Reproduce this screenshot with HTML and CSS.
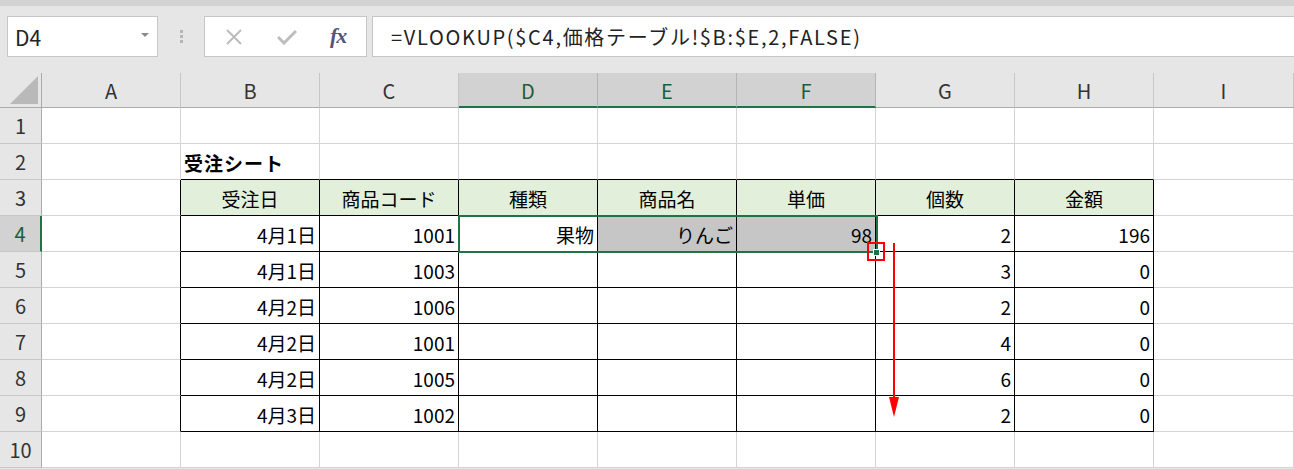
FILE: index.html
```html
<!DOCTYPE html>
<html lang="ja">
<head>
    <meta charset="UTF-8">
    <title>受注シート</title>
    <link rel="stylesheet" href="styles.css">
</head>
<body>
    <div class="toolbar">
        <div class="name-box">
            <span>D4</span>
            <span class="caret"></span>
        </div>
        <div class="grip"><i></i><i></i><i></i></div>
        <div class="buttons">
            <svg class="icon" width="18" height="16" viewBox="0 0 18 16"><path d="M2 1 L16 15 M16 1 L2 15" stroke="#bdbdbd" stroke-width="2" fill="none"/></svg>
            <svg class="icon" width="20" height="16" viewBox="0 0 20 16"><path d="M1 8 L7 14 L19 2" stroke="#bdbdbd" stroke-width="3" fill="none"/></svg>
            <span class="fx">fx</span>
        </div>
        <div class="formula">=VLOOKUP($C4,価格テーブル!$B:$E,2,FALSE)</div>
    </div>

    <div class="sheet">
        <div class="corner"><span></span></div>
        <div class="ch">A</div>
        <div class="ch">B</div>
        <div class="ch">C</div>
        <div class="ch on">D</div>
        <div class="ch on">E</div>
        <div class="ch on">F</div>
        <div class="ch">G</div>
        <div class="ch">H</div>
        <div class="ch">I</div>

        <div class="rh">1</div>
        <div class="c"></div><div class="c"></div><div class="c"></div><div class="c"></div><div class="c"></div><div class="c"></div><div class="c"></div><div class="c"></div><div class="c"></div>

        <div class="rh">2</div>
        <div class="c"></div>
        <div class="c edge-b title">受注シート</div>
        <div class="c edge-b"></div><div class="c edge-b"></div><div class="c edge-b"></div><div class="c edge-b"></div><div class="c edge-b"></div><div class="c edge-b"></div>
        <div class="c"></div>

        <div class="rh">3</div>
        <div class="c edge-r"></div>
        <div class="c t th">受注日</div>
        <div class="c t th">商品コード</div>
        <div class="c t th">種類</div>
        <div class="c t th">商品名</div>
        <div class="c t th">単価</div>
        <div class="c t th">個数</div>
        <div class="c t th">金額</div>
        <div class="c"></div>

        <div class="rh on">4</div>
        <div class="c edge-r"></div>
        <div class="c t r">4月1日</div>
        <div class="c t r">1001</div>
        <div class="c t r">果物</div>
        <div class="c t r sel">りんご</div>
        <div class="c t r sel">98</div>
        <div class="c t r">2</div>
        <div class="c t r">196</div>
        <div class="c"></div>

        <div class="rh">5</div>
        <div class="c edge-r"></div>
        <div class="c t r">4月1日</div>
        <div class="c t r">1003</div>
        <div class="c t"></div><div class="c t"></div><div class="c t"></div>
        <div class="c t r">3</div>
        <div class="c t r">0</div>
        <div class="c"></div>

        <div class="rh">6</div>
        <div class="c edge-r"></div>
        <div class="c t r">4月2日</div>
        <div class="c t r">1006</div>
        <div class="c t"></div><div class="c t"></div><div class="c t"></div>
        <div class="c t r">2</div>
        <div class="c t r">0</div>
        <div class="c"></div>

        <div class="rh">7</div>
        <div class="c edge-r"></div>
        <div class="c t r">4月2日</div>
        <div class="c t r">1001</div>
        <div class="c t"></div><div class="c t"></div><div class="c t"></div>
        <div class="c t r">4</div>
        <div class="c t r">0</div>
        <div class="c"></div>

        <div class="rh">8</div>
        <div class="c edge-r"></div>
        <div class="c t r">4月2日</div>
        <div class="c t r">1005</div>
        <div class="c t"></div><div class="c t"></div><div class="c t"></div>
        <div class="c t r">6</div>
        <div class="c t r">0</div>
        <div class="c"></div>

        <div class="rh">9</div>
        <div class="c edge-r"></div>
        <div class="c t r">4月3日</div>
        <div class="c t r">1002</div>
        <div class="c t"></div><div class="c t"></div><div class="c t"></div>
        <div class="c t r">2</div>
        <div class="c t r">0</div>
        <div class="c"></div>

        <div class="rh">10</div>
        <div class="c"></div><div class="c"></div><div class="c"></div><div class="c"></div><div class="c"></div><div class="c"></div><div class="c"></div><div class="c"></div><div class="c"></div>

        <!-- selection D4:F4 and fill handle -->
        <div class="selection"></div>
        <div class="handle"></div>
        <div class="mark"></div>
        <svg class="arrow" width="14" height="176" viewBox="0 0 14 176">
            <line x1="7" y1="0" x2="7" y2="160" stroke="#ff0000" stroke-width="2"/>
            <polygon points="2,154 12,154 7,174" fill="#ff0000"/>
        </svg>
    </div>
</body>
</html>
```

FILE: styles.css
```css
* {
    margin: 0;
    padding: 0;
    box-sizing: border-box;
}

body {
    background-color: #e6e6e6;
    font-family: "Noto Sans CJK JP", "Noto Sans", sans-serif;
    width: 1294px;
    height: 469px;
    overflow: hidden;
}

.toolbar {
    display: flex;
    align-items: stretch;
    height: 73px;
    padding: 10px 0 16px 7px;
    border-top: 6px solid #d3d3d3;
}

.name-box {
    width: 151px;
    background: white;
    border: 1px solid #c6c6c6;
    display: flex;
    align-items: center;
    justify-content: space-between;
    padding: 0 8px 0 7px;
    font-size: 21px;
    color: #222;
}

.caret {
    width: 0;
    height: 0;
    border-left: 4px solid transparent;
    border-right: 4px solid transparent;
    border-top: 4px solid #8a8a8a;
    margin-top: -4px;
}

.grip {
    width: 46px;
    display: flex;
    flex-direction: column;
    align-items: center;
    justify-content: center;
    gap: 2px;
}

.grip i {
    display: block;
    width: 3px;
    height: 3px;
    background: #b5b5b5;
}

.buttons {
    width: 163px;
    background: white;
    border: 1px solid #c6c6c6;
    display: flex;
    align-items: center;
    padding-left: 20px;
}

.buttons .icon:first-child {
    margin-right: 34px;
}

.buttons .icon:nth-child(2) {
    margin-right: 33px;
}

.fx {
    font-family: "Liberation Serif", serif;
    font-style: italic;
    font-weight: bold;
    font-size: 22px;
    color: #55557a;
    letter-spacing: -1px;
    margin-top: -2px;
}

.formula {
    flex: 1;
    margin-left: 5px;
    background: white;
    border: 1px solid #c6c6c6;
    border-right: none;
    display: flex;
    align-items: center;
    padding-left: 18px;
    font-size: 20px;
    letter-spacing: 1.7px;
    color: #222;
}

.sheet {
    position: relative;
    display: grid;
    grid-template-columns: 42px repeat(8, 139px) 1fr;
    grid-template-rows: 35px repeat(10, 36px);
    background: white;
}

.corner {
    background: #e6e6e6;
    border-right: 1px solid #ababab;
    border-bottom: 1px solid #ababab;
    position: relative;
}

.corner span {
    position: absolute;
    right: 3px;
    bottom: 3px;
    width: 28px;
    height: 28px;
    background: #b9b9b9;
    clip-path: polygon(100% 0, 100% 100%, 0 100%);
}

.ch {
    background: #e6e6e6;
    border-right: 1px solid #c6c6c6;
    border-bottom: 1px solid #ababab;
    display: flex;
    align-items: center;
    justify-content: center;
    font-size: 20px;
    color: #333;
    padding-top: 1px;
}

.ch.on {
    background: #d2d2d2;
    color: #1e5d3a;
    border-bottom: 2px solid #217346;
    border-right-color: #b4b4b4;
    padding-top: 2px;
}

.rh {
    background: #e6e6e6;
    border-right: 1px solid #ababab;
    border-bottom: 1px solid #c6c6c6;
    display: flex;
    align-items: center;
    justify-content: center;
    font-size: 20px;
    color: #333;
}

.rh.on {
    background: #d2d2d2;
    color: #1e5d3a;
    border-right: 2px solid #217346;
}

.c {
    border-right: 1px solid #d4d4d4;
    border-bottom: 1px solid #d4d4d4;
    display: flex;
    align-items: center;
    padding: 1px 3px 0;
    font-size: 19px;
    color: #000;
    white-space: nowrap;
    overflow: hidden;
}

.c.edge-r {
    border-right-color: #000;
}

.c.edge-b {
    border-bottom-color: #000;
}

.c.t {
    border-right-color: #000;
    border-bottom-color: #000;
}

.c.th {
    background: #e2efda;
    justify-content: center;
}

.c.r {
    justify-content: flex-end;
}

.c.sel {
    background: #c6c6c6;
}

.title {
    font-weight: bold;
    letter-spacing: 1px;
}

.selection {
    position: absolute;
    left: 458px;
    top: 142px;
    width: 420px;
    height: 38px;
    border: 2px solid #217346;
    pointer-events: none;
}

.handle {
    position: absolute;
    left: 873px;
    top: 176px;
    width: 7px;
    height: 7px;
    background: #217346;
    border: 1px solid white;
}

.mark {
    position: absolute;
    left: 867px;
    top: 169px;
    width: 18px;
    height: 19px;
    border: 2px solid #ff0000;
}

.arrow {
    position: absolute;
    left: 887px;
    top: 170px;
}
```
